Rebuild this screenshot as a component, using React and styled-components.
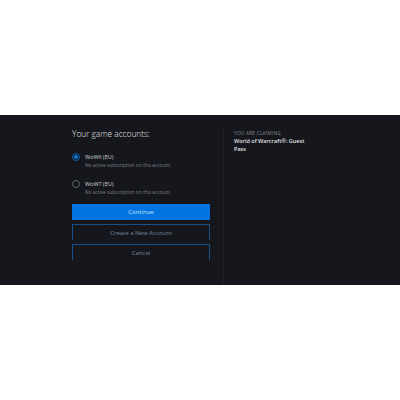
import React from 'react';
import styled, { createGlobalStyle } from 'styled-components';

const GlobalStyle = createGlobalStyle`
  html, body {
    margin: 0;
    padding: 0;
    background: #fff;
    font-family: "Open Sans", "Liberation Sans", sans-serif;
  }
`;

const Page = styled.div`
  width: 400px;
  height: 400px;
  padding-top: 115px;
  box-sizing: border-box;
`;

const Panel = styled.div`
  height: 170px;
  background: #15171d;
  display: flex;
`;

const Main = styled.div`
  width: 224px;
  box-sizing: border-box;
  margin-top: 10px;
  padding: 3px 13px 0 72px;
  border-right: 1px solid #1f2229;
`;

const Heading = styled.h2`
  margin: 0 0 13px;
  font-size: 8.3px;
  line-height: 12px;
  font-weight: 300;
  color: #e2e3e6;
`;

const AccountList = styled.div`
  display: flex;
  flex-direction: column;
  gap: 11px;
  margin-bottom: 8px;
`;

const Account = styled.div`
  display: flex;
  align-items: flex-start;
  gap: 5px;
`;

const Radio = styled.span`
  width: 8px;
  height: 8px;
  flex: none;
  border-radius: 50%;
  box-sizing: border-box;
  border: 1px solid ${(props) => (props.$checked ? '#0b62b4' : '#5f6369')};
  display: flex;
  align-items: center;
  justify-content: center;

  &::after {
    content: '';
    width: 4px;
    height: 4px;
    border-radius: 50%;
    background: ${(props) => (props.$checked ? '#0e78d8' : 'transparent')};
  }
`;

const AccountName = styled.div`
  font-size: 5.5px;
  line-height: 8px;
  font-weight: 400;
  color: #d3d5d9;
`;

const AccountNote = styled.div`
  font-size: 4.8px;
  line-height: 8px;
  color: #7d8087;
`;

const Actions = styled.div`
  display: flex;
  flex-direction: column;
  gap: 4px;
`;

const Button = styled.button`
  height: 16px;
  padding: 0;
  box-sizing: border-box;
  font-family: inherit;
  font-size: 6px;
  line-height: 1;
  color: ${(props) => (props.$primary ? '#cfe5fa' : '#75879b')};
  background: ${(props) => (props.$primary ? '#0074e0' : 'transparent')};
  border: ${(props) => (props.$primary ? '0' : '1px solid #14528c')};
  border-bottom: 0;
`;

const Aside = styled.div`
  flex: 1;
  padding: 15px 0 0 10px;
`;

const Label = styled.div`
  font-size: 4.8px;
  line-height: 7px;
  letter-spacing: 0.2px;
  text-transform: uppercase;
  color: #85888e;
`;

const Claim = styled.div`
  width: 74px;
  font-size: 5.5px;
  line-height: 8px;
  font-weight: 600;
  color: #e0e1e4;
`;

const accounts = [
  { name: 'WoW6 (EU)', checked: true },
  { name: 'WoW7 (EU)', checked: false },
];

const App = () => {
  return (
    <Page>
      <GlobalStyle />
      <Panel>
        <Main>
          <Heading>Your game accounts:</Heading>
          <AccountList>
            {accounts.map((account) => (
              <Account key={account.name}>
                <Radio $checked={account.checked} />
                <div>
                  <AccountName>{account.name}</AccountName>
                  <AccountNote>No active subscription on this account.</AccountNote>
                </div>
              </Account>
            ))}
          </AccountList>
          <Actions>
            <Button $primary>Continue</Button>
            <Button>Create a New Account</Button>
            <Button>Cancel</Button>
          </Actions>
        </Main>
        <Aside>
          <Label>You are claiming</Label>
          <Claim>World of Warcraft®: Guest Pass</Claim>
        </Aside>
      </Panel>
    </Page>
  );
};

export default App;
